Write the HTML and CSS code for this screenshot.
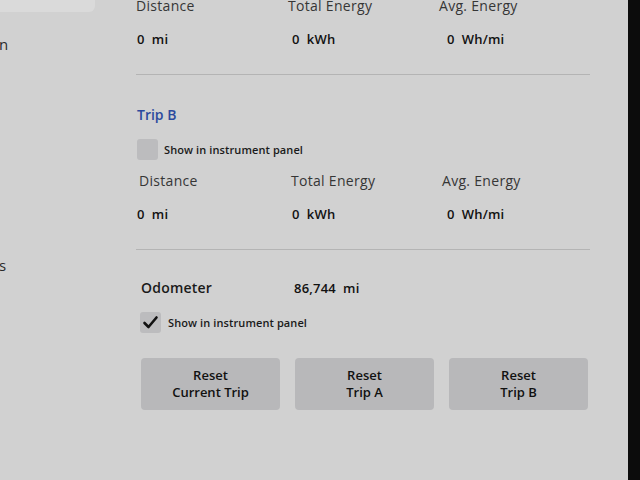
FILE: index.html
```html
<!DOCTYPE html>
<html>
<head>
<meta charset="utf-8">
<link rel="stylesheet" href="styles.css">
</head>
<body>
<div class="screen">
  <aside class="sidebar">
    <div class="side-card"></div>
    <div class="side-n">n</div>
    <div class="side-s">s</div>
  </aside>
  <main class="content">
    <div class="stats first">
      <div class="label">Distance</div>
      <div class="label">Total Energy</div>
      <div class="label">Avg. Energy</div>
    </div>
    <div class="stats values">
      <div class="value">0&nbsp; mi</div>
      <div class="value">0&nbsp; kWh</div>
      <div class="value">0&nbsp; Wh/mi</div>
    </div>
    <hr class="divider">
    <div class="section-title">Trip B</div>
    <div class="check-row">
      <span class="checkbox"></span>
      <span class="check-label">Show in instrument panel</span>
    </div>
    <div class="stats labels2">
      <div class="label">Distance</div>
      <div class="label">Total Energy</div>
      <div class="label">Avg. Energy</div>
    </div>
    <div class="stats values">
      <div class="value">0&nbsp; mi</div>
      <div class="value">0&nbsp; kWh</div>
      <div class="value">0&nbsp; Wh/mi</div>
    </div>
    <hr class="divider">
    <div class="stats odo">
      <div class="odo-label">Odometer</div>
      <div class="value">86,744&nbsp; mi</div>
    </div>
    <div class="check-row odo-check">
      <span class="checkbox checked">
        <svg width="21" height="21" viewBox="0 0 21 21"><polyline points="4.5,11 8.5,15 16.5,5.5" fill="none" stroke="#111" stroke-width="2.6" stroke-linecap="round" stroke-linejoin="round"/></svg>
      </span>
      <span class="check-label">Show in instrument panel</span>
    </div>
    <div class="buttons">
      <button class="btn"><span class="btn-line">Reset</span><span class="btn-line">Current Trip</span></button>
      <button class="btn"><span class="btn-line">Reset</span><span class="btn-line">Trip A</span></button>
      <button class="btn"><span class="btn-line">Reset</span><span class="btn-line">Trip B</span></button>
    </div>
  </main>
  <div class="edge"></div>
</div>
</body>
</html>
```
FILE: styles.css
```css
html, body {
  margin: 0;
  padding: 0;
}
body {
  width: 640px;
  height: 480px;
  overflow: hidden;
  background: #d1d1d1;
  font-family: "Open Sans", "Liberation Sans", sans-serif;
  color: #222;
}
.screen {
  display: flex;
  height: 480px;
}
.sidebar {
  width: 136px;
  flex: none;
  display: flex;
  flex-direction: column;
}
.side-card {
  width: 95px;
  height: 12px;
  background: #dadada;
  border-bottom-right-radius: 6px;
}
.side-n, .side-s {
  font-size: 15px;
  line-height: 18px;
  color: #2a2a2a;
  margin-left: -1px;
}
.side-n {
  margin-top: 23px;
}
.side-s {
  margin-top: 203px;
}
.content {
  width: 454px;
  flex: none;
  display: flex;
  flex-direction: column;
}
.stats {
  display: grid;
  grid-template-columns: 152px 151px 151px;
}
.first {
  margin-top: -3px;
}
.label {
  font-size: 14px;
  line-height: 18px;
  font-weight: 500;
  letter-spacing: 0.3px;
  color: #363636;
}
.values {
  margin-top: 15px;
}
.value {
  font-size: 13px;
  line-height: 18px;
  font-weight: 600;
  letter-spacing: 0.2px;
  color: #111;
  padding-left: 1px;
}
.values .value:nth-child(2) {
  padding-left: 4px;
}
.values .value:nth-child(3) {
  padding-left: 8px;
}
.divider {
  margin: 26px 0 0 0;
  border: 0;
  height: 1px;
  background: #b4b4b4;
}
.section-title {
  margin-top: 30px;
  font-size: 14px;
  line-height: 20px;
  font-weight: 600;
  color: #2c4a9e;
  padding-left: 1px;
}
.check-row {
  margin-top: 14px;
  display: flex;
  align-items: center;
  padding-left: 1px;
}
.checkbox {
  width: 21px;
  height: 21px;
  border-radius: 3px;
  background: #bcbcbe;
  display: block;
  flex: none;
}
.check-label {
  margin-left: 6px;
  font-size: 11px;
  font-weight: 600;
  letter-spacing: 0.1px;
  color: #1a1a1a;
}
.labels2 {
  margin-top: 12px;
  padding-left: 3px;
}
.odo {
  margin-top: 29px;
  padding-left: 5px;
}
.odo-label {
  font-size: 14px;
  line-height: 18px;
  font-weight: 600;
  letter-spacing: 0.2px;
  color: #1a1a1a;
}
.odo .value {
  padding-left: 1px;
}
.odo-check {
  margin-top: 15px;
  padding-left: 4px;
}
.odo-check .check-label {
  margin-left: 7px;
}
.buttons {
  margin-top: 25px;
  display: grid;
  grid-template-columns: repeat(3, 139px);
  column-gap: 15px;
  padding-left: 5px;
}
.btn {
  height: 52px;
  border: 0;
  border-radius: 4px;
  background: #b8b8ba;
  font-family: "Open Sans", "Liberation Sans", sans-serif;
  font-size: 13px;
  font-weight: 600;
  color: #111;
  padding: 0;
  display: flex;
  flex-direction: column;
  align-items: center;
  justify-content: center;
}
.btn-line {
  display: block;
  line-height: 17px;
}
.edge {
  margin-left: auto;
  width: 12px;
  background: #0c0c0c;
}
```
